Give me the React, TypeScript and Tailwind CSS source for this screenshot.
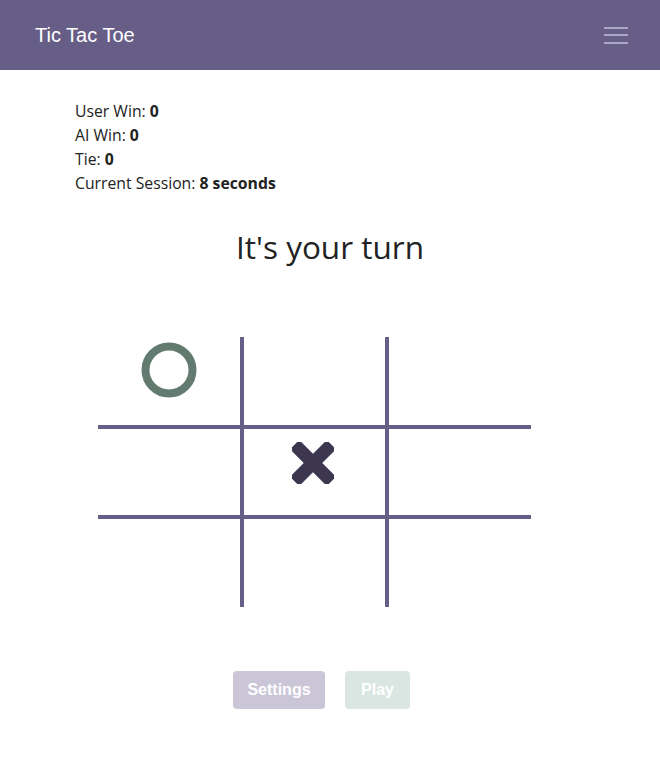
import React from "react";

const cells = [
  "border-r-4 border-b-4 w-[146px] h-[92px]",
  "border-r-4 border-b-4 w-[145px] h-[92px]",
  "border-b-4 w-[142px] h-[92px]",
  "border-r-4 border-b-4 w-[146px] h-[90px]",
  "border-r-4 border-b-4 w-[145px] h-[90px]",
  "border-b-4 w-[142px] h-[90px]",
  "border-r-4 w-[146px] h-[88px]",
  "border-r-4 w-[145px] h-[88px]",
  "w-[142px] h-[88px]",
];

const board = ["O", "", "", "", "X", "", "", "", ""];

function Nought() {
  return (
    <svg width="56" height="56" viewBox="0 0 56 56">
      <circle cx="28" cy="28" r="23.5" fill="none" stroke="#627a70" strokeWidth="8" />
    </svg>
  );
}

function Cross() {
  return (
    <svg width="42" height="42" viewBox="0 0 42 42">
      <g fill="#3d3650" transform="rotate(45 21 21)">
        <rect x="14.5" y="-5" width="13" height="52" rx="2.5" />
        <rect x="-5" y="14.5" width="52" height="13" rx="2.5" />
      </g>
    </svg>
  );
}

export default function App() {
  return (
    <div className="min-h-screen bg-white font-['Open_Sans',sans-serif] text-[#222]">
      {/* Navbar */}
      <nav className="h-[70px] bg-[#675e88] flex items-center justify-between pl-[35px] pr-[32px]">
        <span className="text-white text-[20px] font-['Liberation_Sans',sans-serif]">
          Tic Tac Toe
        </span>
        <div className="flex flex-col gap-[5.5px] w-[24px]">
          <span className="block h-[2px] bg-[#aca7c4]" />
          <span className="block h-[2px] bg-[#aca7c4]" />
          <span className="block h-[2px] bg-[#aca7c4]" />
        </div>
      </nav>

      {/* Stats */}
      <div className="pl-[75px] pt-[29px] text-[15.75px] leading-[24px]">
        <p>
          User Win: <b>0</b>
        </p>
        <p>
          AI Win: <b>0</b>
        </p>
        <p>
          Tie: <b>0</b>
        </p>
        <p>
          Current Session: <b>8 seconds</b>
        </p>
      </div>

      <h1 className="text-center text-[31.5px] leading-[38px] mt-[33px]">It's your turn</h1>

      {/* Board */}
      <div className="flex justify-center mt-[71px] pr-[31px]">
        <div className="grid grid-cols-[146px_145px_142px]">
          {cells.map((c, i) => (
            <div
              key={i}
              className={`${c} border-[#675e88] flex justify-center items-start pt-[5px]`}
            >
              {board[i] === "O" && <Nought />}
              {board[i] === "X" && (
                <div className="pt-[8px] pr-[4px]">
                  <Cross />
                </div>
              )}
            </div>
          ))}
        </div>
      </div>

      {/* Buttons */}
      <div className="flex justify-center gap-[20px] mt-[64px] pr-[17px] font-['Liberation_Sans',sans-serif]">
        <button className="w-[92px] h-[38px] rounded-[4px] bg-[#cac6d8] text-white font-bold text-[16px]">
          Settings
        </button>
        <button className="w-[65px] h-[38px] rounded-[4px] bg-[#d9e6e1] text-white font-bold text-[16px]">
          Play
        </button>
      </div>
    </div>
  );
}
